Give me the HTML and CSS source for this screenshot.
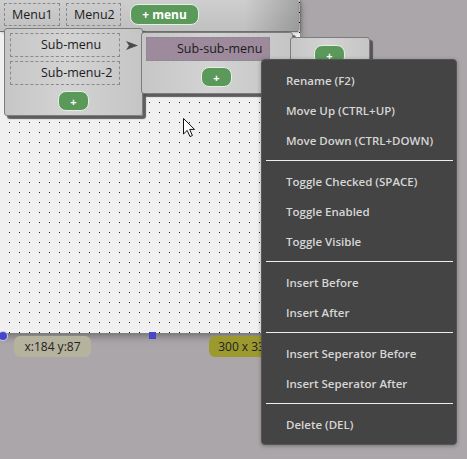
FILE: index.html
```html
<!DOCTYPE html>
<html>
<head>
  <title>Menu Designer</title>
  <link rel="stylesheet" href="styles.css">
</head>
<body>
  <div class="stage">
    <!-- design surface -->
    <div class="canvas">
      <div class="menubar">
        <div class="menu-item top-item">Menu1</div>
        <div class="menu-item top-item">Menu2</div>
        <button class="add-btn add-menu">+ menu</button>
      </div>
    </div>

    <!-- open dropdowns -->
    <div class="dropdown level-1">
      <div class="dropdown-row">
        <div class="menu-item sub-item">Sub-menu</div>
        <svg class="sub-arrow" width="12" height="9" viewBox="0 0 12 9">
          <path d="M0 0 L12 4.5 L0 9 L3 4.5 Z" fill="#4a4a4a"/>
        </svg>
      </div>
      <div class="menu-item sub-item">Sub-menu-2</div>
      <button class="add-btn add-small">+</button>
    </div>

    <div class="dropdown level-2">
      <div class="menu-item sub-item selected">Sub-sub-menu</div>
      <button class="add-btn add-small">+</button>
    </div>

    <div class="dropdown level-3">
      <button class="add-btn add-small">+</button>
    </div>

    <svg class="cursor" width="13" height="20" viewBox="0 0 13 20">
      <path d="M0.5 0.5 L0.5 16 L4.2 12.4 L7 18.6 L9.4 17.5 L6.7 11.4 L11.5 11.4 Z" fill="#fff" stroke="#111" stroke-width="1"/>
    </svg>

    <!-- resize handles and info -->
    <div class="handle handle-corner"></div>
    <div class="handle handle-edge"></div>
    <div class="info-pill pos-pill">x:184 y:87</div>
    <div class="info-pill size-pill">300 x 333</div>

    <!-- context menu -->
    <div class="context-menu">
      <div class="ctx-item">Rename (F2)</div>
      <div class="ctx-item">Move Up (CTRL+UP)</div>
      <div class="ctx-item">Move Down (CTRL+DOWN)</div>
      <div class="ctx-sep"></div>
      <div class="ctx-item">Toggle Checked (SPACE)</div>
      <div class="ctx-item">Toggle Enabled</div>
      <div class="ctx-item">Toggle Visible</div>
      <div class="ctx-sep"></div>
      <div class="ctx-item">Insert Before</div>
      <div class="ctx-item">Insert After</div>
      <div class="ctx-sep"></div>
      <div class="ctx-item">Insert Seperator Before</div>
      <div class="ctx-item">Insert Seperator After</div>
      <div class="ctx-sep"></div>
      <div class="ctx-item">Delete (DEL)</div>
    </div>
  </div>
</body>
</html>
```

FILE: styles.css
```css
body {
  margin: 0;
  font-family: "Open Sans", "Noto Sans", sans-serif;
  background-color: #aaa6aa;
}

.stage {
  position: relative;
  width: 467px;
  height: 459px;
  overflow: hidden;
}

.canvas {
  position: absolute;
  left: 0;
  top: 0;
  width: 300px;
  height: 333px;
  background-color: #f0f0f0;
  background-image: radial-gradient(circle at 0.5px 0.5px, #1e1e1e 0.65px, transparent 0.75px);
  background-size: 10px 10px;
  background-position: 9px 2px;
  box-shadow: 0 3px 8px rgba(0, 0, 0, 0.35);
}

.menubar {
  display: flex;
  align-items: center;
  width: 294px;
  height: 23px;
  padding: 3px 0 5px 4px;
  border-bottom: 1px solid #6e6e6e;
  background: linear-gradient(to right, rgba(0, 0, 0, 0) 82%, rgba(0, 0, 0, 0.2) 100%),
              linear-gradient(#cecece, #c0c0c0);
  box-shadow: 2px 0 3px rgba(0, 0, 0, 0.45);
}

.menu-item {
  box-sizing: border-box;
  border: 1px dashed #8a8a8a;
  color: #1c1c1c;
  font-size: 12.5px;
  white-space: nowrap;
}

.top-item {
  width: 56px;
  height: 23px;
  line-height: 21px;
  padding-left: 7px;
  margin-right: 6px;
}

.top-item + .top-item {
  width: 55px;
  margin-right: 9px;
}

.add-btn {
  box-sizing: border-box;
  border: 1px solid #e4efe4;
  border-radius: 8px;
  background-color: #5b995b;
  color: #fff;
  font-family: inherit;
  font-weight: bold;
  padding: 0;
  cursor: pointer;
}

.add-menu {
  width: 69px;
  height: 21px;
  font-size: 12px;
  line-height: 18px;
}

.add-small {
  width: 31px;
  height: 20px;
  font-size: 11px;
  line-height: 17px;
}

.dropdown {
  position: absolute;
  box-sizing: border-box;
  display: flex;
  flex-direction: column;
  border: 1px solid #7c7c7c;
  border-radius: 3px;
  background: linear-gradient(to right, #c6c6c6, #d3d3d3 45%, #c5c5c5);
  box-shadow: 3px 3px 1px rgba(80, 74, 80, 0.9);
}

.level-1 {
  left: 4px;
  top: 28px;
  width: 139px;
  height: 88px;
  padding: 4px 0 0 5px;
  gap: 4px;
}

.dropdown-row {
  display: flex;
  align-items: center;
  gap: 6px;
}

.sub-item {
  width: 110px;
  height: 24px;
  line-height: 22px;
  padding-left: 30px;
}

.sub-arrow {
  display: block;
}

.level-1 .add-small {
  margin: 2px 0 0 48px;
}

.level-2 {
  left: 141px;
  top: 32px;
  width: 152px;
  height: 62px;
  padding: 4px 0 0 4px;
  gap: 6px;
}

.selected {
  width: 124px;
  background-color: #9d8a9d;
}

.level-2 .add-small {
  margin-left: 55px;
}

.level-3 {
  left: 290px;
  top: 37px;
  width: 80px;
  height: 70px;
  padding: 7px 0 0 23px;
}

.cursor {
  position: absolute;
  left: 183px;
  top: 118px;
}

.handle {
  position: absolute;
  background-color: #4646c8;
}

.handle-corner {
  left: -1px;
  top: 332px;
  width: 8px;
  height: 8px;
  border-radius: 50%;
  box-shadow: 0 0 0 1px #c8c8f0;
}

.handle-edge {
  left: 149px;
  top: 332px;
  width: 7px;
  height: 7px;
}

.info-pill {
  position: absolute;
  top: 336px;
  height: 21px;
  line-height: 21px;
  border-radius: 6px;
  font-size: 12px;
  color: #222;
  text-align: center;
}

.pos-pill {
  left: 14px;
  width: 77px;
  background-color: #b5b39e;
}

.size-pill {
  left: 209px;
  width: 72px;
  background-color: #9c9a2f;
}

.context-menu {
  position: absolute;
  left: 261px;
  top: 59px;
  width: 196px;
  box-sizing: border-box;
  padding: 6px 0 4px;
  border: 1px solid #555;
  border-radius: 4px;
  background-color: #444;
  box-shadow: 0 1px 4px rgba(0, 0, 0, 0.3);
}

.ctx-item {
  height: 30px;
  line-height: 30px;
  padding-left: 24px;
  color: #d6d6d6;
  font-size: 11.5px;
  font-weight: 600;
  white-space: nowrap;
}

.ctx-sep {
  height: 1px;
  margin: 4px 3px 6px 4px;
  background-color: #eeeeee;
}
```
